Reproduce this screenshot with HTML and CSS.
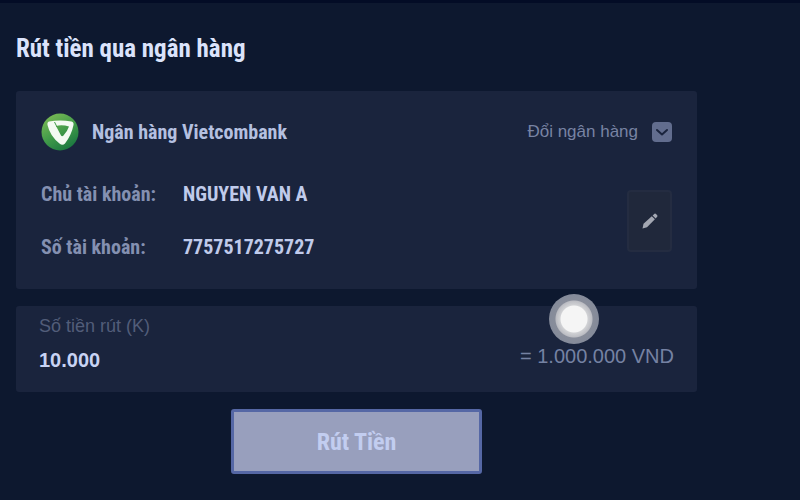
FILE: index.html
```html
<!DOCTYPE html>
<html lang="vi">
<head>
    <meta charset="UTF-8">
    <meta name="viewport" content="width=device-width, initial-scale=1.0">
    <title>Rút tiền qua ngân hàng</title>
    <link rel="stylesheet" href="styles.css">
</head>
<body>
    <main class="page">
        <h1 class="title">Rút tiền qua ngân hàng</h1>

        <form class="withdraw">
            <section class="card bank">
                <div class="bank-head">
                    <svg class="bank-logo" viewBox="0 0 38 38" aria-hidden="true">
                        <defs>
                            <linearGradient id="green" x1="0.2" y1="0" x2="0.8" y2="1">
                                <stop offset="0" stop-color="#7cbb55"/>
                                <stop offset="0.5" stop-color="#429b4a"/>
                                <stop offset="1" stop-color="#15733f"/>
                            </linearGradient>
                        </defs>
                        <circle cx="19" cy="19" r="18.5" fill="url(#green)"/>
                        <path fill="#f3faf3" fill-rule="evenodd" d="M8 8.500Q19 6.500 30.500 8.500Q33 9 32.500 12Q30.500 22 24 30.500Q21.500 33 18.500 30.500Q9 23 6.500 12Q6 9 8 8.500ZM15 13L20 22.500Q21 24 22.500 22.500Q26.500 18 28 13.500Q21 11.500 15 13Z"/>
                        <path d="M13.500 9L16 14" stroke="#429b4a" stroke-width="1"/>
                    </svg>
                    <h2 class="bank-name">Ngân hàng Vietcombank</h2>
                    <button type="button" class="change">
                        Đổi ngân hàng
                        <svg class="change-icon" viewBox="0 0 20 20" aria-hidden="true">
                            <rect width="20" height="20" rx="4" fill="#626d8e"/>
                            <path d="M5 8L10 12.500L15 8" fill="none" stroke="#1a243d" stroke-width="2" stroke-linecap="round" stroke-linejoin="round"/>
                        </svg>
                    </button>
                </div>

                <div class="bank-body">
                    <dl class="account">
                        <dt>Chủ tài khoản:</dt>
                        <dd>NGUYEN VAN A</dd>
                        <dt>Số tài khoản:</dt>
                        <dd>7757517275727</dd>
                    </dl>
                    <button type="button" class="edit" aria-label="Sửa">
                        <svg class="edit-icon" viewBox="0 0 16 16" aria-hidden="true">
                            <path fill="#a3a7b2" d="M0.500 15.500L1.500 10.800L9.800 3.200L12.900 6.300L5 14.300ZM10.600 2.500L12.500 0.800Q13.200 0.300 14 1L15.200 2.300Q15.800 3 15.200 3.800L13.600 5.500Z"/>
                        </svg>
                    </button>
                </div>
            </section>

            <section class="card amount">
                <div class="amount-field">
                    <label for="amount">Số tiền rút (K)</label>
                    <input id="amount" type="text" inputmode="decimal" value="10.000">
                </div>
                <output class="amount-total" for="amount">= 1.000.000 VND</output>
                <span class="touch"></span>
            </section>

            <button type="submit" class="submit">Rút Tiền</button>
        </form>
    </main>
</body>
</html>
```

FILE: styles.css
```css
* {
    box-sizing: border-box;
}

body {
    margin: 0;
    min-height: 100vh;
    background: #0d182f;
    border-top: 3px solid #030c26;
    color: #c5cfee;
    font-family: "Liberation Sans", Arial, sans-serif;
}

.page {
    padding: 30px 103px 24px 16px;
}

.title,
.bank-name,
.account,
.submit {
    font-family: "Liberation Sans Narrow", "Roboto Condensed", "Open Sans Condensed", "Liberation Sans", sans-serif;
    font-weight: bold;
}

.title {
    margin: 0 0 26px;
    color: #dbe3fb;
    font-size: 25px;
    line-height: 32px;
}

.withdraw {
    display: flex;
    flex-direction: column;
    gap: 17px;
}

button {
    cursor: pointer;
}

.card {
    background: #1a243d;
    border-radius: 3px;
}

.bank {
    padding: 22px 25px 28px;
}

.bank-head {
    display: flex;
    align-items: center;
    margin-bottom: 29px;
}

.bank-logo {
    width: 38px;
    height: 38px;
}

.bank-name {
    margin: 0 auto 0 13px;
    color: #b5c0e0;
    font-size: 20px;
    line-height: 38px;
}

.change {
    display: flex;
    align-items: center;
    gap: 14px;
    padding: 0;
    border: none;
    background: none;
    color: #7883a3;
    font-family: inherit;
    font-size: 17px;
}

.change-icon {
    width: 20px;
    height: 20px;
}

.bank-body {
    display: flex;
    justify-content: space-between;
    align-items: center;
}

.account {
    display: grid;
    grid-template-columns: 142px auto;
    row-gap: 25px;
    margin: 0;
    font-size: 20px;
    line-height: 28px;
}

.account dt {
    color: #8490b1;
}

.account dd {
    margin: 0;
    color: #c0cbeb;
}

.edit {
    display: grid;
    place-items: center;
    width: 45px;
    height: 62px;
    padding: 0;
    border: 2px solid #242c41;
    border-radius: 4px;
    background: #20283b;
}

.edit-icon {
    width: 16px;
    height: 16px;
}

.amount {
    position: relative;
    display: flex;
    justify-content: space-between;
    align-items: flex-end;
    padding: 8px 23px 20px;
}

.amount-field {
    display: flex;
    flex-direction: column;
    gap: 10px;
}

.amount-field label {
    color: #525d79;
    font-size: 18px;
    line-height: 24px;
}

.amount-field input {
    width: 240px;
    height: 24px;
    padding: 0;
    border: none;
    background: none;
    color: #c8d3f3;
    font-family: inherit;
    font-size: 20px;
    font-weight: bold;
}

.amount-total {
    color: #7582a3;
    font-size: 20px;
    line-height: 32px;
}

/* touch indicator floating over the form */
.touch {
    position: absolute;
    top: -12px;
    right: 98px;
    width: 50px;
    height: 50px;
    border-radius: 50%;
    background: radial-gradient(circle, #f5f5f5 13px, #d0d1d4 14px, #bcbdc3 18px, #888d9a 19px, #858b9a 24px);
    pointer-events: none;
}

.submit {
    align-self: center;
    width: 37%;
    height: 65px;
    border: 3px solid #5567a5;
    border-radius: 3px;
    background: #989fbd;
    color: #c2cdf0;
    font-size: 24px;
}
```
